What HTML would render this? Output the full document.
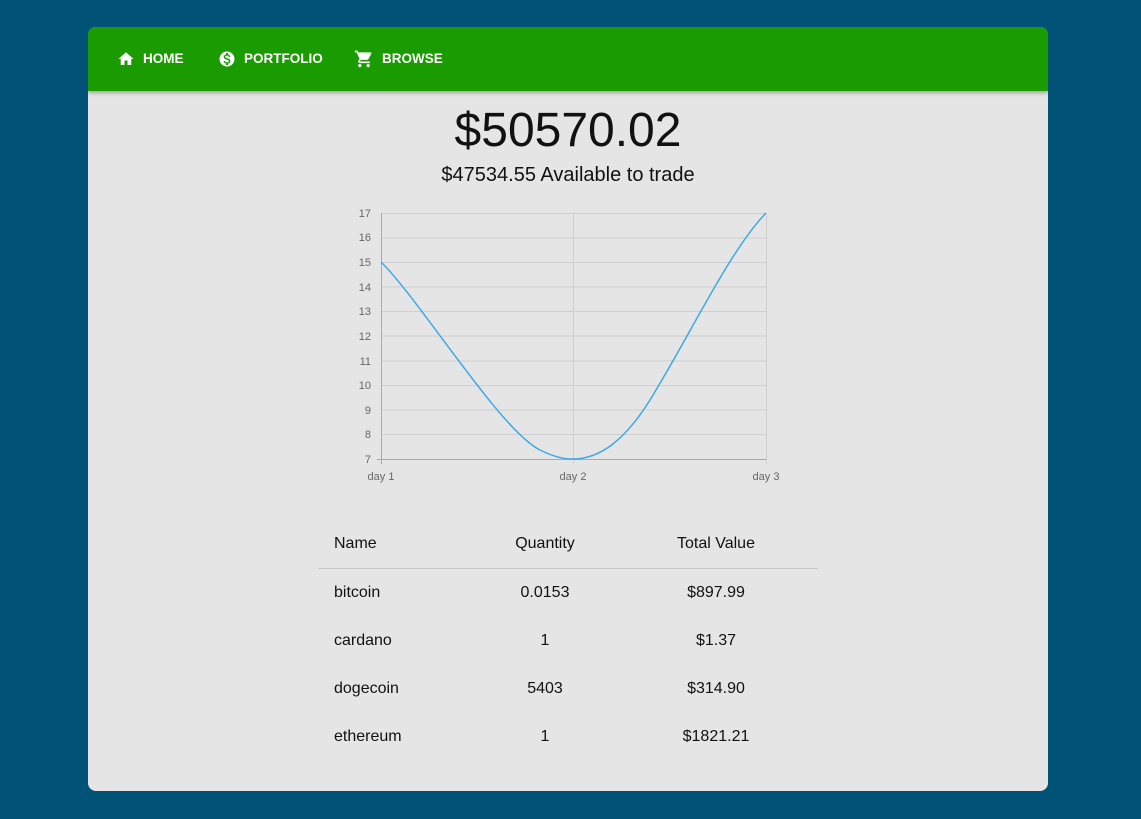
<!DOCTYPE html>
<html><head><style>
body{margin:0;background:#005276;font-family:"Liberation Sans",Roboto,sans-serif;width:1141px;height:819px;overflow:hidden;position:relative}
.card{position:absolute;left:88px;top:27px;width:960px;height:764px;background:#e5e5e5;border-radius:8px;overflow:hidden}
.bar{height:64px;background:#1a9c00;box-shadow:0 2px 4px rgba(0,0,0,.3);position:relative}
.nav{position:absolute;top:0;height:63px;display:flex;align-items:center;color:#fff;font-weight:bold;font-size:13.5px;letter-spacing:0}
.nav svg{margin-right:8px}
.big{position:absolute;top:76px;width:100%;text-align:center;font-size:48px;color:#111}
.sub{position:absolute;top:137px;width:100%;text-align:center;font-size:20px;color:#111}
table{position:absolute;left:230px;top:493px;width:500px;border-collapse:collapse;font-size:16px;color:#111;table-layout:fixed}
td{height:48px;padding:0}
tr.h td{border-bottom:1px solid #c8c8c8;height:48px}
td.n{padding-left:16px;width:134px}
td.q{text-align:center;width:154px}
td.v{text-align:center;padding-right:8px}
</style></head><body>
<div class="card">
<div class="bar">
<div class="nav" style="left:29px"><svg width="18" height="18" viewBox="0 0 24 24"><path fill="#fff" d="M10 20v-6h4v6h5v-8h3L12 3 2 12h3v8z"/></svg>HOME</div>
<div class="nav" style="left:130px"><svg width="18" height="18" viewBox="0 0 24 24"><path fill="#fff" d="M12 2C6.48 2 2 6.48 2 12s4.48 10 10 10 10-4.48 10-10S17.52 2 12 2zm1.41 16.09V20h-2.67v-1.93c-1.71-.36-3.160-1.46-3.270-3.4h1.96c.1 1.05.82 1.87 2.65 1.87 1.96 0 2.4-.98 2.4-1.59 0-.83-.44-1.61-2.67-2.140-2.48-.6-4.180-1.62-4.180-3.67 0-1.72 1.39-2.84 3.11-3.21V4h2.67v1.95c1.86.45 2.79 1.86 2.85 3.39H14.3c-.05-1.11-.64-1.87-2.22-1.87-1.5 0-2.4.68-2.4 1.64 0 .84.65 1.39 2.67 1.91s4.18 1.39 4.18 3.91c-.01 1.83-1.38 2.83-3.12 3.16z"/></svg>PORTFOLIO</div>
<div class="nav" style="left:266px"><svg width="20" height="20" viewBox="0 0 24 24"><path fill="#fff" d="M7 18c-1.1 0-2 .9-2 2s.9 2 2 2 2-.9 2-2-.9-2-2-2zM1 2v2h2l3.6 7.59-1.35 2.45c-.16.28-.25.61-.25.96 0 1.1.9 2 2 2h12v-2H7.42c-.14 0-.25-.11-.25-.25l.03-.12.9-1.63h7.45c.75 0 1.41-.41 1.75-1.03l3.58-6.49A1 1 0 0 0 20 4H5.21l-.94-2H1zm16 16c-1.1 0-2 .9-2 2s.9 2 2 2 2-.9 2-2-.9-2-2-2z"/></svg>BROWSE</div>
</div>
<div class="big">$50570.02</div>
<div class="sub">$47534.55 Available to trade</div>
<svg style="position:absolute;left:0;top:0" width="960" height="764" viewBox="88 27 960 764">
<g stroke="#cfcfcf" stroke-width="1">
<line x1="381" y1="213.5" x2="766" y2="213.5"/><line x1="381" y1="238" x2="766" y2="238"/><line x1="381" y1="262.5" x2="766" y2="262.5"/><line x1="381" y1="287" x2="766" y2="287"/><line x1="381" y1="311.5" x2="766" y2="311.5"/><line x1="381" y1="336" x2="766" y2="336"/><line x1="381" y1="361" x2="766" y2="361"/><line x1="381" y1="385.5" x2="766" y2="385.5"/><line x1="381" y1="410" x2="766" y2="410"/><line x1="381" y1="434.5" x2="766" y2="434.5"/>
<line x1="573.5" y1="213" x2="573.5" y2="464"/><line x1="766.5" y1="213" x2="766.5" y2="464"/>
</g>
<g stroke="#aaa"><line x1="381.5" y1="213" x2="381.5" y2="464"/><line x1="377" y1="459.5" x2="766" y2="459.5"/></g>
<g fill="#666" font-size="11" font-family="Liberation Sans,sans-serif" text-anchor="end">
<text x="371" y="217">17</text><text x="371" y="241">16</text><text x="371" y="266">15</text><text x="371" y="291">14</text><text x="371" y="315">13</text><text x="371" y="340">12</text><text x="371" y="365">11</text><text x="371" y="389">10</text><text x="371" y="414">9</text><text x="371" y="438">8</text><text x="371" y="463">7</text>
</g>
<g fill="#666" font-size="11" font-family="Liberation Sans,sans-serif" text-anchor="middle">
<text x="381" y="480">day 1</text><text x="573" y="480">day 2</text><text x="766" y="480">day 3</text></g>
<path d="M381,262 C420,300 500,430 540,450 C560,460 570,459 573,459 C600,459 625,440 650,400 C690,335 730,250 766,213" fill="none" stroke="#3ea8e6" stroke-width="1.5"/>
</svg>
<table>
<tr class="h"><td class="n">Name</td><td class="q">Quantity</td><td class="v">Total Value</td></tr>
<tr><td class="n">bitcoin</td><td class="q">0.0153</td><td class="v">$897.99</td></tr>
<tr><td class="n">cardano</td><td class="q">1</td><td class="v">$1.37</td></tr>
<tr><td class="n">dogecoin</td><td class="q">5403</td><td class="v">$314.90</td></tr>
<tr><td class="n">ethereum</td><td class="q">1</td><td class="v">$1821.21</td></tr>
</table>
</div>
</body></html>
